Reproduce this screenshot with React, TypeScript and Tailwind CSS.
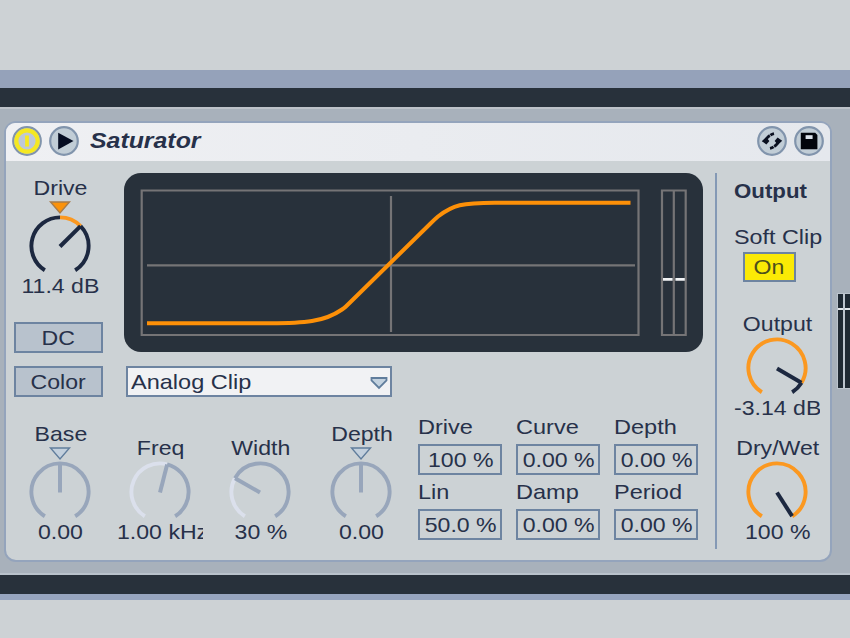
import React from 'react';
import { clsx } from 'clsx';

const NAVY = '#1c2840';
const MUTED = '#98a6bb';
const PALE = '#dbe0ec';
const ORANGE = '#fb9820';

function Txt({ children, className }: { children: React.ReactNode; className?: string }) {
  return (
    <span className={clsx('inline-block whitespace-pre text-[21px] leading-6', className ?? 'scale-x-[1.1]')}>
      {children}
    </span>
  );
}

// angles are in degrees, clockwise from 12 o'clock
function arc(cx: number, cy: number, r: number, from: number, to: number) {
  const pt = (deg: number) => {
    const a = (deg * Math.PI) / 180;
    return `${cx + r * Math.sin(a)} ${cy - r * Math.cos(a)}`;
  };
  return `M${pt(from)}A${r} ${r} 0 ${to - from > 180 ? 1 : 0} 1 ${pt(to)}`;
}

type Segment = { from: number; to: number; color: string };

type KnobProps = {
  label: string;
  value: string;
  angle: number;
  segments: Segment[];
  needle?: string;
  marker?: 'filled' | 'outline';
  clipped?: boolean;
};

function Knob({ label, value, angle, segments, needle = NAVY, marker, clipped }: KnobProps) {
  const h = marker ? 74 : 60;
  const cy = h - 28;
  const a = (angle * Math.PI) / 180;
  return (
    <div className="flex w-[86px] shrink-0 flex-col items-center">
      <div className="flex pl-[2px]">
        <Txt>{label}</Txt>
      </div>
      <svg width="86" height={h} viewBox={`0 0 86 ${h}`} fill="none">
        {segments.map((s) => (
          <path key={s.from} d={arc(43, cy, 28.6, s.from, s.to)} stroke={s.color} strokeWidth="3.9" />
        ))}
        <path
          d={`M43 ${cy + 0.5}L${43 + 28.5 * Math.sin(a)} ${cy - 28.5 * Math.cos(a)}`}
          stroke={needle}
          strokeWidth="4"
        />
        {marker && (
          <path
            d="M33.5 2H52.5L43 13Z"
            fill={marker === 'filled' ? '#fb920a' : '#c3d0dd'}
            stroke={marker === 'filled' ? '#a77c4b' : '#607d9c'}
            strokeWidth="1.4"
          />
        )}
      </svg>
      <div className={clsx('flex w-full', clipped ? 'justify-start overflow-hidden' : 'justify-center pl-[2px]')}>
        <Txt className={clipped ? 'origin-left scale-x-[1.1]' : undefined}>{value}</Txt>
      </div>
    </div>
  );
}

function Toggle({ children }: { children: string }) {
  return (
    <button className="flex h-[31px] w-[89px] items-center justify-center border-2 border-[#6d84a1] bg-[#b8c2cd]">
      <Txt>{children}</Txt>
    </button>
  );
}

function Field({ label, value }: { label: string; value: string }) {
  return (
    <div className="flex w-[84px] flex-col">
      <Txt className="origin-left scale-x-[1.12] self-start">{label}</Txt>
      <div className="mt-[5px] flex h-[31px] items-center justify-center border-2 border-[#6d84a1] pl-[2px]">
        <Txt>{value}</Txt>
      </div>
    </div>
  );
}

const fields = [
  { label: 'Drive', value: '100 %' },
  { label: 'Curve', value: '0.00 %' },
  { label: 'Depth', value: '0.00 %' },
  { label: 'Lin', value: '50.0 %' },
  { label: 'Damp', value: '0.00 %' },
  { label: 'Period', value: '0.00 %' },
];

function RoundButton({ children }: { children: React.ReactNode }) {
  return (
    <svg width="30" height="30" viewBox="0 0 30 30" fill="none">
      <circle cx="15" cy="15" r="13.8" fill="#c1cdd6" stroke="#8194ac" strokeWidth="2.2" />
      {children}
    </svg>
  );
}

function Header() {
  return (
    <header className="flex h-[38px] items-center rounded-t-[9px] bg-linear-to-r from-[#eff0f3] to-[#e5e8ed] px-[6px] pb-[2px]">
      <RoundButton>
        <circle cx="15" cy="15" r="10.7" fill="#bec8d8" stroke="#f5e822" strokeWidth="4.2" />
        <path d="M15 9.5V20.5" stroke="#f5e822" strokeWidth="3.8" />
      </RoundButton>
      <div className="ml-[7px]">
        <RoundButton>
          <path d="M9.2 6.8L24.5 15L9.2 23.4Z" fill="#050d22" />
        </RoundButton>
      </div>
      <h1 className="ml-[11px] origin-left scale-x-[1.13] text-[22px] leading-6 font-bold italic">Saturator</h1>
      <div className="ml-auto flex gap-[7px]">
        <RoundButton>
          <path d="M4.8 15.2L9 11.2L12.4 15L9.4 18.6Z" fill="#0a1020" />
          <path d="M9 13.6C10 11.5 11.3 10.4 12.8 9.5M13.4 9.1C14.6 8.3 15.6 7.9 17 7.6" stroke="#0a1020" strokeWidth="2.8" />
          <path d="M25.2 14.8L21 18.8L17.6 15L20.6 11.4Z" fill="#0a1020" />
          <path d="M21 16.4C20 18.5 18.7 19.6 17.2 20.5M16.6 20.9C15.4 21.7 14.4 22.1 13 22.4" stroke="#0a1020" strokeWidth="2.8" />
        </RoundButton>
        <RoundButton>
          <path d="M6.8 6.8H21.2L23.4 9V23.2H6.8Z" fill="#02050c" />
          <path d="M11.6 9.2H18.6V13H11.6Z" fill="#dbe2ea" />
        </RoundButton>
      </div>
    </header>
  );
}

function TransferCurve() {
  return (
    <div className="h-[179px] w-[579px] rounded-[17px] bg-[#28313b]">
      <svg width="579" height="179" viewBox="124 173 579 179" fill="none">
        <g stroke="#757476" strokeWidth="2.2">
          <path d="M141.7 190.5H638.5V335H141.7Z" />
          <path d="M147 265.3H635" />
          <path d="M391 196V332" />
          <path d="M662 190.5H685.7V335H662Z" />
          <path d="M673.8 190.5V335" />
        </g>
        <path
          d="M147 323.3H270C304 323.3 324 322 342 309.5C345 307.5 347 305.5 350 302.5L430 224C433 221 435 219 438 216.5C453 205 462 202.7 495 202.7H630.5"
          stroke="#fd9008"
          strokeWidth="4"
        />
        <path d="M663 279.4H672.6M675.4 279.4H684.8" stroke="#f2f4f6" strokeWidth="2.6" />
      </svg>
    </div>
  );
}

function LevelMeter() {
  return (
    <div className="mt-[172px] ml-[5px] flex h-[96px] w-[13px] gap-[2px] bg-[#bcc4cd] py-px pl-px">
      {[0, 1].map((i) => (
        <div key={i} className="flex w-[5px] flex-col bg-[#1f2933] pt-[14px]">
          <div className="h-[2px] bg-[#e2e6ea]" />
        </div>
      ))}
    </div>
  );
}

export default function App() {
  return (
    <div
      className="flex h-[638px] w-[850px] flex-col overflow-hidden bg-[#cdd2d5] text-[#27314a]"
      style={{ fontFamily: '"Liberation Sans", Arial, sans-serif' }}
    >
      <div className="h-[70px] shrink-0" />
      <div className="h-[18px] shrink-0 bg-[#95a2ba]" />
      <div className="h-[19px] shrink-0 bg-[#28313b]" />

      <main className="flex h-[468px] shrink-0 items-start border-t-2 border-b-2 border-t-[#bdc2c9] border-b-[#b9c2cb] bg-[#a8b1bb] pt-[12px] pl-[4px]">
        {/* Device */}
        <section className="h-[441px] w-[828px] shrink-0 rounded-[12px] border-2 border-[#94a4bc] bg-[#ccd2d5]">
          <Header />
          <div className="flex pt-[12px]">
            <div className="w-[709px] shrink-0">
              <div className="flex pl-[8px]">
                <div className="w-[110px] shrink-0 pt-[3px]">
                  <div className="pl-[2.5px]">
                    <Knob
                      label="Drive"
                      value="11.4 dB"
                      angle={46}
                      marker="filled"
                      segments={[
                        { from: -148, to: 0, color: NAVY },
                        { from: 0, to: 46, color: ORANGE },
                        { from: 46, to: 148, color: NAVY },
                      ]}
                    />
                  </div>
                  <div className="mt-[24px] flex flex-col gap-[13px]">
                    <Toggle>DC</Toggle>
                    <Toggle>Color</Toggle>
                  </div>
                </div>
                <div>
                  <TransferCurve />
                  <div className="mt-[14px] ml-[2px] flex h-[31px] w-[266px] items-center justify-between border-2 border-[#6d84a1] bg-[#f1f2f4] pr-[2px] pl-[3px]">
                    <Txt className="origin-left scale-x-[1.12]">Analog Clip</Txt>
                    <svg className="mt-[3px]" width="18" height="14" viewBox="0 0 18 14">
                      <path d="M1.5 2H16.5V4.5L9 12L1.5 4.5Z" fill="#c3d2df" stroke="#607d9c" strokeWidth="1.8" />
                    </svg>
                  </div>
                </div>
              </div>

              <div className="flex items-start pt-[17px] pl-[10.5px]">
                <div className="flex items-end gap-[14.4px] pt-[8px]">
                  <Knob
                    label="Base"
                    value="0.00"
                    angle={0}
                    marker="outline"
                    needle={MUTED}
                    segments={[{ from: -148, to: 148, color: MUTED }]}
                  />
                  <Knob
                    label="Freq"
                    value="1.00 kHz"
                    angle={14.5}
                    needle={MUTED}
                    clipped
                    segments={[
                      { from: -148, to: 14.5, color: PALE },
                      { from: 14.5, to: 148, color: MUTED },
                    ]}
                  />
                  <Knob
                    label="Width"
                    value="30 %"
                    angle={-61}
                    needle={MUTED}
                    segments={[
                      { from: -148, to: -61, color: PALE },
                      { from: -61, to: 148, color: MUTED },
                    ]}
                  />
                  <Knob
                    label="Depth"
                    value="0.00"
                    angle={0}
                    marker="outline"
                    needle={MUTED}
                    segments={[{ from: -148, to: 148, color: MUTED }]}
                  />
                </div>
                <div className="ml-[14px] grid grid-cols-[84px_84px_84px] content-start gap-x-[14px] gap-y-[5px] pt-px">
                  {fields.map((f, i) => (
                    <Field key={i} {...f} />
                  ))}
                </div>
              </div>
            </div>

            <div className="h-[376px] w-[2px] shrink-0 bg-[#8499b5]" />

            {/* Output column */}
            <div className="flex flex-col items-start pt-[6px] pl-[17px]">
              <Txt className="origin-left scale-x-[1.06] font-bold">Output</Txt>
              <Txt className="mt-[22px] origin-left scale-x-[1.11]">Soft Clip</Txt>
              <button className="mt-[3px] ml-[9px] flex h-[30px] w-[53px] items-center justify-center border-2 border-[#6d84a1] bg-[#fbea05] text-[#4d4f1c]">
                <Txt>On</Txt>
              </button>
              <div className="mt-[30px] flex flex-col gap-[16px]">
                <Knob
                  label="Output"
                  value="-3.14 dB"
                  angle={121}
                  clipped
                  segments={[
                    { from: -148, to: 121, color: ORANGE },
                    { from: 121, to: 148, color: NAVY },
                  ]}
                />
                <Knob
                  label="Dry/Wet"
                  value="100 %"
                  angle={148}
                  segments={[{ from: -148, to: 148, color: ORANGE }]}
                />
              </div>
            </div>
          </div>
        </section>

        <LevelMeter />
      </main>

      <div className="h-[19px] shrink-0 bg-[#28313b]" />
      <div className="h-[6px] shrink-0 bg-[#97a5bf]" />
    </div>
  );
}
